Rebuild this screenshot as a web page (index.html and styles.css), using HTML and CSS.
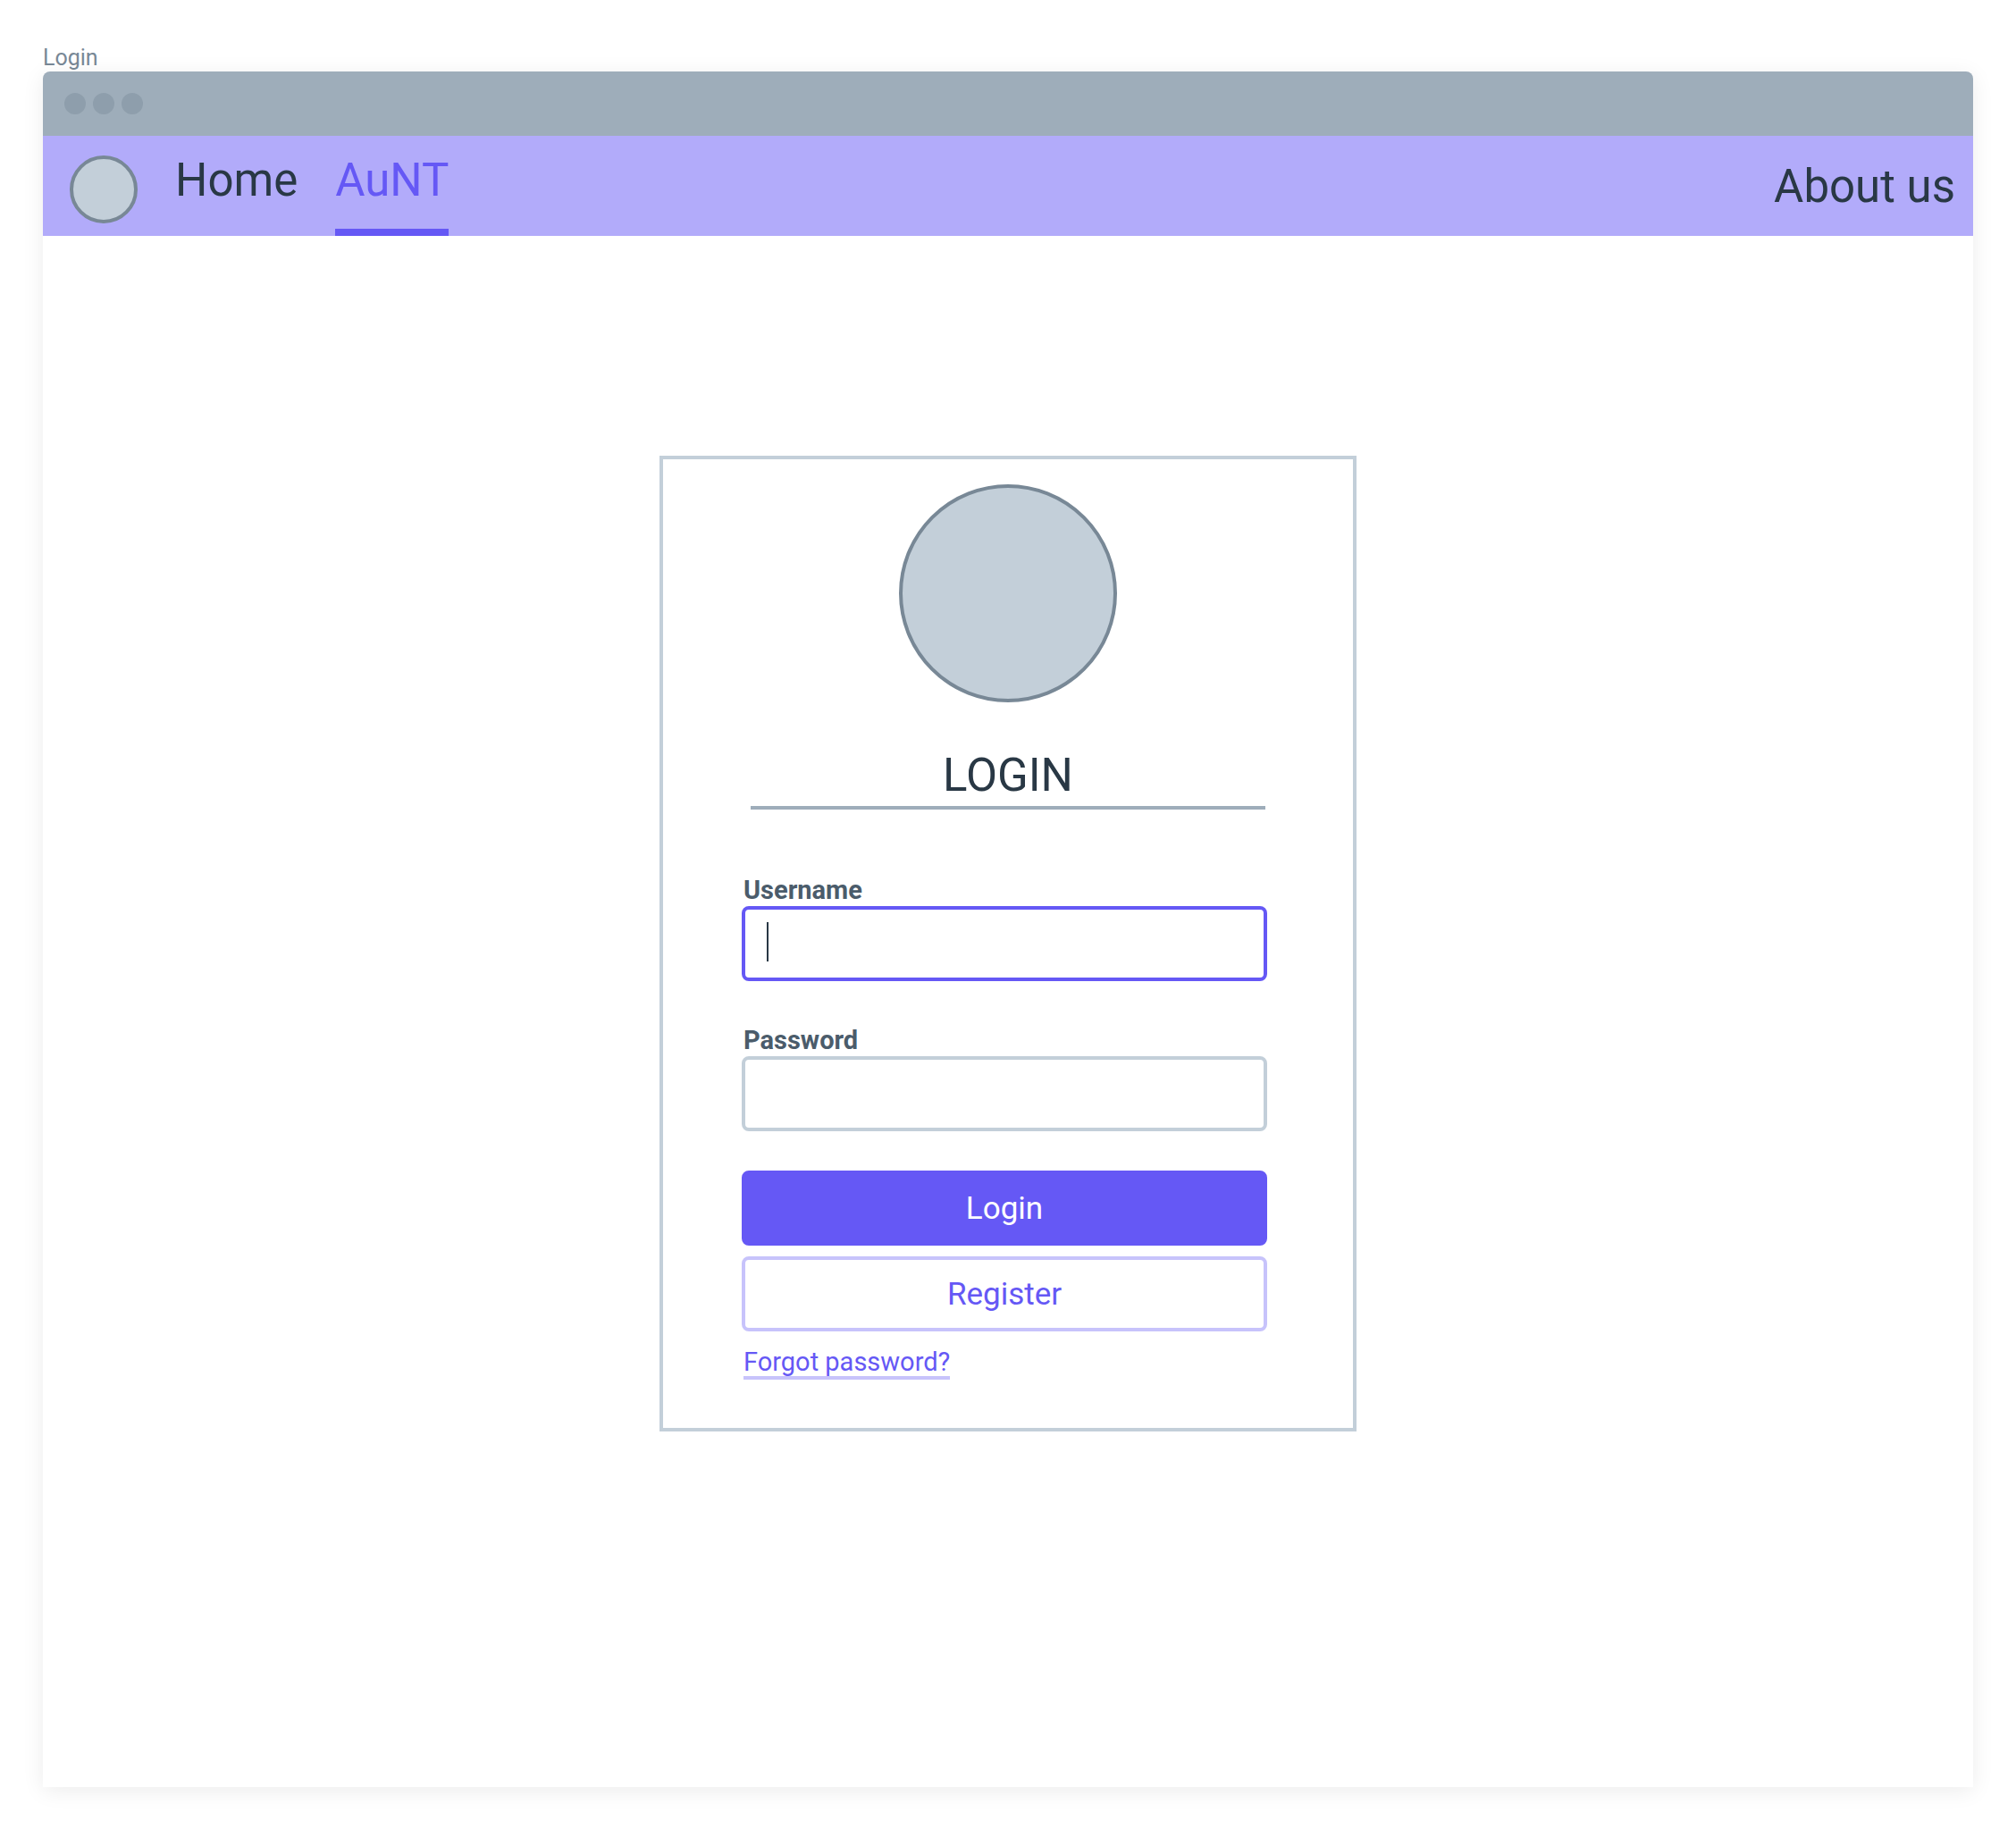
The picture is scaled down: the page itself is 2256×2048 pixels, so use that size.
FILE: index.html
```html
<!DOCTYPE html>
<html lang="en">
<head>
<meta charset="utf-8">
<meta name="viewport" content="width=device-width, initial-scale=1">
<title>Login</title>
<link rel="stylesheet" href="styles.css">
</head>
<body>
<div class="screen-name">Login</div>
<div class="window">
  <div class="titlebar" aria-hidden="true">
    <span class="dot"></span><span class="dot"></span><span class="dot"></span>
  </div>
  <nav class="nav">
    <span class="nav-logo"></span>
    <a class="nav-link" href="#home">Home</a>
    <a class="nav-link nav-link-active" href="#aunt" aria-current="page">AuNT</a>
    <a class="nav-about" href="#about">About us</a>
  </nav>
  <main class="content">
    <section class="card">
      <div class="avatar"></div>
      <h1 class="heading">LOGIN</h1>
      <form class="form">
        <div class="field">
          <label class="label" for="username">Username</label>
          <div class="control control-focused">
            <input class="input" id="username" type="text" autocomplete="off">
          </div>
        </div>
        <div class="field">
          <label class="label" for="password">Password</label>
          <div class="control">
            <input class="input" id="password" type="password" autocomplete="off">
          </div>
        </div>
        <div class="actions">
          <button class="button button-primary" type="submit">Login</button>
          <button class="button button-outline" type="button">Register</button>
        </div>
        <a class="forgot" href="#forgot">Forgot password?</a>
      </form>
    </section>
  </main>
</div>
</body>
</html>
```

FILE: styles.css
```css
:root {
  --ink: #293845;
  --slate: #788896;
  --steel: #9eadba;
  --mist: #c3cfd9;
  --accent: #6558f5;
  --accent-mid: #b2abfa;
  --accent-light: #c7c3fb;
}

* {
  box-sizing: border-box;
}

body {
  display: flex;
  flex-direction: column;
  min-height: 100vh;
  margin: 0;
  padding: 0 48px 48px;
  background: #fff;
  color: var(--ink);
  font-family: Roboto, "Liberation Sans", sans-serif;
}

.screen-name {
  padding-top: 50px;
  color: var(--slate);
  font-size: 25px;
  line-height: 30px;
}

.window {
  display: flex;
  flex: 1;
  flex-direction: column;
  border-radius: 8px 8px 0 0;
  background: #fff;
  box-shadow: 0 4px 24px rgba(0, 0, 0, 0.08);
}

.titlebar {
  display: flex;
  align-items: center;
  gap: 8px;
  height: 72px;
  padding: 0 24px;
  border-radius: 8px 8px 0 0;
  background: var(--steel);
}

.dot {
  width: 24px;
  height: 24px;
  border-radius: 50%;
  background: #8e9eac;
}

.nav {
  display: flex;
  align-items: stretch;
  gap: 42px;
  height: 112px;
  padding: 0 20px 0 30px;
  background: var(--accent-mid);
  font-size: 51px;
}

.nav-logo {
  align-self: flex-end;
  width: 76px;
  height: 76px;
  margin-bottom: 14px;
  border: 4px solid var(--slate);
  border-radius: 50%;
  background: var(--mist);
}

.nav-link,
.nav-about {
  display: flex;
  align-items: center;
  color: var(--ink);
  text-decoration: none;
}

.nav-link {
  padding-bottom: 6px;
  border-bottom: 8px solid transparent;
}

.nav-link-active {
  border-bottom-color: var(--accent);
  color: var(--accent);
}

.nav-about {
  margin-left: auto;
}

.content {
  display: flex;
  justify-content: center;
  padding: 246px 24px 48px;
}

.card {
  width: 100%;
  max-width: 780px;
  padding: 28px 88px 54px;
  border: 4px solid var(--mist);
}

.avatar {
  width: 244px;
  height: 244px;
  margin: 0 auto;
  border: 4px solid var(--slate);
  border-radius: 50%;
  background: var(--mist);
}

.heading {
  max-width: 576px;
  margin: 52px auto 0;
  padding-bottom: 4px;
  border-bottom: 4px solid var(--steel);
  font-size: 51px;
  font-weight: 400;
  line-height: 60px;
  text-align: center;
}

.form {
  display: flex;
  flex-direction: column;
  align-items: stretch;
  margin-top: 72px;
  padding-right: 8px;
}

.field + .field {
  margin-top: 48px;
}

.label {
  display: block;
  padding-left: 2px;
  color: #4b5c6b;
  font-size: 29px;
  font-weight: 700;
  line-height: 36px;
}

.control {
  position: relative;
}

.input {
  display: block;
  width: 100%;
  height: 84px;
  padding: 0 24px;
  border: 4px solid var(--mist);
  border-radius: 8px;
  outline: none;
  background: #fff;
  color: var(--ink);
  font: inherit;
  font-size: 35px;
}

.control-focused .input {
  border-color: var(--accent);
}

/* Text cursor of the focused field */
.control-focused::after {
  position: absolute;
  top: 18px;
  left: 28px;
  width: 2px;
  height: 44px;
  background: var(--ink);
  content: "";
}

.actions {
  display: grid;
  gap: 12px;
  margin-top: 44px;
}

.button {
  height: 84px;
  border: 4px solid var(--accent);
  border-radius: 8px;
  font: inherit;
  font-size: 35px;
  cursor: pointer;
}

.button-primary {
  background: var(--accent);
  color: #fff;
}

.button-outline {
  border-color: var(--accent-light);
  background: #fff;
  color: var(--accent);
}

.forgot {
  align-self: flex-start;
  margin: 18px 0 0 2px;
  border-bottom: 4px solid var(--accent-light);
  color: var(--accent);
  font-size: 29px;
  line-height: 32px;
  text-decoration: none;
}
```
